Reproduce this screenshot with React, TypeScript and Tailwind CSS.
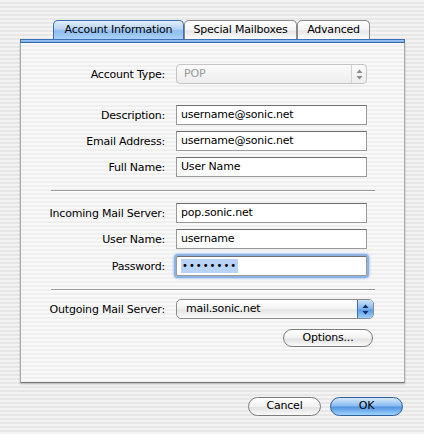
import React from "react";

const stripe =
  "bg-[repeating-linear-gradient(180deg,#f3f3f3_0px,#f3f3f3_2px,#e7e7e7_2px,#e7e7e7_4px)]";
const paneStripe =
  "bg-[repeating-linear-gradient(180deg,#f9f9f9_0px,#f9f9f9_2px,#efefef_2px,#efefef_4px)]";
const txt = "text-[11px] tracking-[-0.2px]";

function Label({ children }: { children: React.ReactNode }) {
  return (
    <div className={"w-[145px] shrink-0 text-right pr-[1px] text-black leading-none " + txt}>
      {children}
    </div>
  );
}

function Field({ value, focused }: { value: string; focused?: boolean }) {
  return (
    <div
      className={
        "ml-[10px] w-[191px] h-[20px] bg-white flex items-center pl-[4px] text-black border border-[#9a9a9a] border-t-[#6e6e6e] " +
        txt +
        " " +
        (focused ? "rounded-[2px] shadow-[0_0_0_2px_#8db2e3,0_0_2px_3px_#b9d1f0]" : "")
      }
    >
      {focused ? (
        <span className="bg-[#b8d3f5] px-[1px] tracking-[1px] text-[10px] leading-[14px]">
          ••••••••
        </span>
      ) : (
        value
      )}
    </div>
  );
}

function Arrows({ color }: { color: string }) {
  return (
    <svg width="7" height="11" viewBox="0 0 7 11">
      <path d="M3.5 0.5 L6.5 4 L0.5 4 Z" fill={color} />
      <path d="M3.5 10.5 L6.5 7 L0.5 7 Z" fill={color} />
    </svg>
  );
}

function Row({
  label,
  children,
  className,
}: {
  label: string;
  children: React.ReactNode;
  className?: string;
}) {
  return (
    <div className={"flex items-center " + (className ?? "")}>
      <Label>{label}</Label>
      {children}
    </div>
  );
}

function Sep({ className }: { className?: string }) {
  return (
    <div className={"ml-[30px] w-[324px] " + (className ?? "")}>
      <div className="h-[1px] bg-[#9c9c9c]" />
      <div className="h-[1px] bg-white" />
    </div>
  );
}

const whiteGrad =
  "bg-[linear-gradient(180deg,#ffffff_0%,#f1f1f1_50%,#e2e2e2_55%,#fafafa_100%)]";

export default function App() {
  return (
    <div
      className={
        "w-[424px] h-[434px] overflow-hidden " +
        stripe +
        " font-['DejaVu_Sans',sans-serif] select-none"
      }
    >
      <div className="pt-[20px] pl-[20px] w-[405px]">
        {/* Tabs */}
        <div className="flex pl-[33px] h-[19px] items-end">
          <div
            className={
              "w-[131px] h-[19px] rounded-t-[5px] border border-b-0 border-[#3d6fb4] bg-[linear-gradient(180deg,#e3effb_0%,#b6d3f3_45%,#8fbdf0_55%,#a9d0f8_100%)] flex items-center justify-center text-black " +
              txt
            }
          >
            Account Information
          </div>
          <div
            className={
              "w-[113px] h-[19px] rounded-t-[5px] border border-b-0 border-[#8a8a8a] bg-[linear-gradient(180deg,#ffffff_0%,#f3f3f3_50%,#e6e6e6_55%,#fdfdfd_100%)] flex items-center justify-center text-black " +
              txt
            }
          >
            Special Mailboxes
          </div>
          <div
            className={
              "w-[73px] h-[19px] rounded-t-[5px] border border-b-0 border-[#8a8a8a] bg-[linear-gradient(180deg,#ffffff_0%,#f3f3f3_50%,#e6e6e6_55%,#fdfdfd_100%)] flex items-center justify-center text-black " +
              txt
            }
          >
            Advanced
          </div>
        </div>
        {/* blue bar */}
        <div className="h-[4px] border border-[#3d6fb4] bg-[linear-gradient(180deg,#a9cdf5,#6fa6e8)]" />
        {/* pane */}
        <div
          className={
            "h-[340px] border-l border-r border-b border-[#a9a9a9] border-b-[#777] shadow-[0_1px_2px_rgba(0,0,0,0.25)] " +
            paneStripe
          }
        >
          <div className="flex flex-col pt-[21px]">
            <Row label="Account Type:">
              <div
                className={
                  "ml-[10px] w-[191px] h-[20px] rounded-[4px] border border-[#c4c4c4] bg-[linear-gradient(180deg,#fbfbfb,#ededed)] flex items-center text-[#9a9a9a] " +
                  txt
                }
              >
                <span className="pl-[7px] flex-1">POP</span>
                <div className="w-[15px] h-full border-l border-[#d2d2d2] flex items-center justify-center">
                  <Arrows color="#8a8a8a" />
                </div>
              </div>
            </Row>
            <Row label="Description:" className="mt-[21px]">
              <Field value="username@sonic.net" />
            </Row>
            <Row label="Email Address:" className="mt-[6px]">
              <Field value="username@sonic.net" />
            </Row>
            <Row label="Full Name:" className="mt-[6px]">
              <Field value="User Name" />
            </Row>
            <Sep className="mt-[13px]" />
            <Row label="Incoming Mail Server:" className="mt-[11px]">
              <Field value="pop.sonic.net" />
            </Row>
            <Row label="User Name:" className="mt-[6px]">
              <Field value="username" />
            </Row>
            <Row label="Password:" className="mt-[7px]">
              <Field value="" focused />
            </Row>
            <Sep className="mt-[13px]" />
            <Row label="Outgoing Mail Server:" className="mt-[8px]">
              <div
                className={
                  "ml-[10px] w-[198px] h-[20px] rounded-[5px] border border-[#8d8d8d] bg-[linear-gradient(180deg,#ffffff_0%,#f2f2f2_50%,#e4e4e4_55%,#fbfbfb_100%)] flex items-center text-black overflow-hidden " +
                  txt
                }
              >
                <span className="pl-[9px] flex-1">mail.sonic.net</span>
                <div className="w-[16px] h-full border-l border-[#3d6fb4] bg-[linear-gradient(180deg,#cfe3f9_0%,#7fb3ee_50%,#5a9be6_55%,#9dd0fb_100%)] flex items-center justify-center">
                  <Arrows color="#0c2a5c" />
                </div>
              </div>
            </Row>
            <div className="mt-[10px] ml-[262px]">
              <div
                className={
                  "w-[90px] h-[18px] rounded-full border border-[#7c7c7c] flex items-center justify-center text-black " +
                  whiteGrad +
                  " " +
                  txt
                }
              >
                Options...
              </div>
            </div>
          </div>
        </div>
      </div>
      {/* bottom buttons */}
      <div className="flex pl-[248px] mt-[14px] gap-[9px]">
        <div
          className={
            "w-[73px] h-[19px] rounded-full border border-[#7c7c7c] flex items-center justify-center text-black " +
            whiteGrad +
            " " +
            txt
          }
        >
          Cancel
        </div>
        <div
          className={
            "w-[73px] h-[19px] rounded-full border border-[#2d5f9e] bg-[linear-gradient(180deg,#d7e9fb_0%,#86b9ef_48%,#4f92e2_52%,#9fd3fb_100%)] flex items-center justify-center text-black " +
            txt
          }
        >
          OK
        </div>
      </div>
    </div>
  );
}
